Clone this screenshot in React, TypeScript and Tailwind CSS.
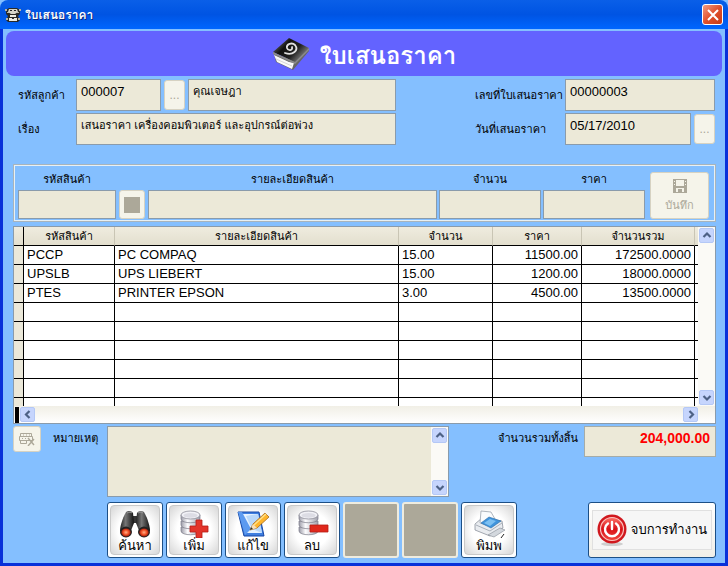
import { useId } from 'react'
import clsx from 'clsx'

interface Item {
  code: string
  name: string
  qty: string
  price: string
  total: string
}

const items: Item[] = [
  { code: 'PCCP', name: 'PC COMPAQ', qty: '15.00', price: '11500.00', total: '172500.0000' },
  { code: 'UPSLB', name: 'UPS LIEBERT', qty: '15.00', price: '1200.00', total: '18000.0000' },
  { code: 'PTES', name: 'PRINTER EPSON', qty: '3.00', price: '4500.00', total: '13500.0000' },
]

const EMPTY_ROWS = 6

const fieldBox = 'min-w-0 rounded-none border border-[#8a9bab] bg-[#ece9d8] text-black outline-none'
const flatButton = 'flex shrink-0 items-center justify-center rounded-[3px] border border-[#d6d2c2] bg-[#f5f4ea] text-[#aca899]'

function TitleIcon() {
  return (
    <svg viewBox="0 0 16 16" className="size-4 shrink-0">
      <path d="M1 3l3-2h8l3 2v4l-2 2 2 4-2 2H3l-2-2 2-4-2-2z" fill="#2a2a26" />
      <path d="M0 2h2v2H0zM14 2h2v2h-2zM2 5h2v1H2zM12 5h2v1h-2z" fill="#b5b3a6" />
      <path d="M4 2h8l1 3-3 2H6L3 5z" fill="#d6d4c8" />
      <path d="M5 3h2v1H5zM9 3h2v1H9z" fill="#222" />
      <path d="M5 8h6v2H5zM4 11h8v3H4z" fill="#ecebe2" />
      <path d="M7 11h2v1H7z" fill="#333" />
      <path d="M1 11h2v2H1zM13 11h2v2h-2z" fill="#b9b5a4" />
    </svg>
  )
}

function BookIcon() {
  return (
    <svg viewBox="0 0 38 34" className="h-[34px] w-[38px] shrink-0">
      <defs>
        <linearGradient id="book" x1="0" y1="0" x2="1" y2="0.6">
          <stop offset="0" stopColor="#999" />
          <stop offset="0.4" stopColor="#111" />
          <stop offset="0.7" stopColor="#222" />
          <stop offset="1" stopColor="#888" />
        </linearGradient>
      </defs>
      <path d="M2 17l2 8 17 8 16-19v-3L21 23z" fill="#666" />
      <path d="M2 18l3 7 15 7 2-6-5-1z" fill="#fafafa" />
      <path d="M4 22l16 7" stroke="#c5c5c5" strokeWidth="0.7" />
      <path d="M1 15L17 1l20 10-14 14z" fill="url(#book)" />
      <path d="M1 15l22 10 14-14v2L23 27 1 17z" fill="#8b8b8b" />
      <path d="M13 16c8 3 14-3 10-8-3-3-9-1-8 3 1 3 6 3 5-1" fill="none" stroke="#e0e0e0" strokeWidth="1.8" strokeLinecap="round" />
    </svg>
  )
}

function BinocularsIcon() {
  return (
    <svg viewBox="0 0 34 28" className="h-7 w-[34px]">
      <defs>
        <linearGradient id="barrel" x1="0" y1="0" x2="1" y2="0">
          <stop offset="0" stopColor="#222" />
          <stop offset="0.4" stopColor="#777" />
          <stop offset="1" stopColor="#111" />
        </linearGradient>
        <radialGradient id="lens">
          <stop offset="0" stopColor="#ffb089" />
          <stop offset="0.55" stopColor="#f4572c" />
          <stop offset="1" stopColor="#a81d0a" />
        </radialGradient>
      </defs>
      <path d="M14 6h6v7h-6z" fill="#333" />
      <path d="M8 2c2-2 6-1 7 1l1 10-4 10-10-2C2 17 4 9 8 2z" fill="url(#barrel)" />
      <path d="M26 2c-2-2-6-1-7 1l-1 10 4 10 10-2c0-4-2-12-6-19z" fill="url(#barrel)" />
      <path d="M9 3c2-1 4-1 5 0M20 3c2-1 3-1 5 0" stroke="#999" fill="none" />
      <ellipse cx="8" cy="22" rx="6" ry="5.4" fill="#222" />
      <ellipse cx="26" cy="22" rx="6" ry="5.4" fill="#222" />
      <ellipse cx="8" cy="22.4" rx="4.6" ry="4" fill="url(#lens)" />
      <ellipse cx="26" cy="22.4" rx="4.6" ry="4" fill="url(#lens)" />
    </svg>
  )
}

function DatabaseIcon({ sign }: { sign: 'plus' | 'minus' }) {
  return (
    <svg viewBox="0 0 34 28" className="h-7 w-[34px]">
      <defs>
        <linearGradient id="disk" x1="0" y1="0" x2="1" y2="0">
          <stop offset="0" stopColor="#9c9ca8" />
          <stop offset="0.35" stopColor="#fdfdff" />
          <stop offset="1" stopColor="#a0a0ac" />
        </linearGradient>
      </defs>
      <g fill="url(#disk)" stroke="#7d7d8a" strokeWidth="0.7">
        <path d="M4 17v4c0 5 19 5 19 0v-4z" />
        <path d="M4 11v4c0 5 19 5 19 0v-4z" />
        <path d="M4 5v4c0 5 19 5 19 0V5z" />
      </g>
      <ellipse cx="13.5" cy="5" rx="9.5" ry="4" fill="#f1f1f6" stroke="#8d8d98" strokeWidth="0.8" />
      <ellipse cx="13.5" cy="5.4" rx="7" ry="2.3" fill="#dcdce4" />
      {sign === 'plus' ? (
        <path d="M19 10h6v6h6v6h-6v6h-6v-6h-6v-6h6z" fill="#e3342a" stroke="#b51d14" strokeWidth="0.8" />
      ) : (
        <path d="M15 15h18v7H15z" fill="#e0281c" stroke="#b51d14" strokeWidth="0.8" />
      )}
    </svg>
  )
}

function EditIcon() {
  return (
    <svg viewBox="0 0 34 28" className="h-7 w-[34px]">
      <path d="M2 2h21l5 24H8z" fill="#3f7fe0" stroke="#1747a5" />
      <path d="M6 4h16l4 19H11z" fill="#e6f2ff" />
      <path d="M10 6l6 13 10 4-4-19z" fill="#b9d8fa" />
      <path d="M2 2h4l9 17-6 6z" fill="#5c9af0" />
      <path d="M14 20l3-6L29 3l4 4-12 11z" fill="#ffb52c" stroke="#a8691a" strokeWidth="0.8" />
      <path d="M18 15L30 4" stroke="#ffe28c" strokeWidth="1.4" />
      <path d="M14 20l3-6 4 4z" fill="#f7dfb8" />
      <path d="M14 20l1-3 2 2z" fill="#333" />
    </svg>
  )
}

function PrinterIcon() {
  return (
    <svg viewBox="0 0 34 28" className="h-7 w-[34px]">
      <path d="M3 14l7-6 20 3 1 7-13 8L3 20z" fill="#e9ecf0" stroke="#8b929c" strokeWidth="0.8" />
      <path d="M8 13l1-12 10 1 4 7-9 6z" fill="#f9fbfd" stroke="#9aa3ad" strokeWidth="0.8" />
      <path d="M9 13l8-6 12 4-10 7z" fill="#3f94dc" stroke="#2a6ba8" strokeWidth="0.6" />
      <path d="M12 13l6-4 6 2-6 5z" fill="#7cc0f2" />
      <path d="M4 15l14 6 12-8" stroke="#aab1ba" fill="none" />
      <path d="M16 25l12-7 5 2-11 7z" fill="#d3d8de" stroke="#858c95" strokeWidth="0.6" />
      <path d="M32 24l-3 4" stroke="#222" />
    </svg>
  )
}

function PowerIcon() {
  return (
    <svg viewBox="0 0 30 32" className="h-8 w-[30px] shrink-0">
      <defs>
        <linearGradient id="power" x1="0" y1="0" x2="0" y2="1">
          <stop offset="0" stopColor="#ff7167" />
          <stop offset="0.5" stopColor="#d81118" />
          <stop offset="1" stopColor="#f2453d" />
        </linearGradient>
      </defs>
      <ellipse cx="15" cy="30" rx="11" ry="2" fill="#cfcfcf" />
      <circle cx="15" cy="15" r="14.5" fill="#d0181e" />
      <circle cx="15" cy="15" r="11.5" fill="url(#power)" stroke="#f9c4c0" strokeWidth="1.2" />
      <path d="M11 9.5a7 7 0 1 0 8 0M15 8v7" fill="none" stroke="#fff" strokeWidth="2.4" strokeLinecap="round" />
    </svg>
  )
}

function FloppyIcon() {
  return (
    <svg viewBox="0 0 14 14" className="size-3.5" fill="currentColor">
      <path fillRule="evenodd" d="M0 0h14v14H0zM3 1v6h8V1zM3 9v4h2v-3h4v3h2V9z" />
      <path d="M6 11h2v2H6z" />
      <path d="M1 2h1v1H1zM12 2h1v1h-1zM1 5h1v1H1zM12 5h1v1h-1z" fill="#f5f4ea" />
    </svg>
  )
}

function RemoveRowIcon() {
  return (
    <svg viewBox="0 0 16 14" className="h-3.5 w-4" fill="none" stroke="currentColor">
      <path d="M1.500 1.500h11v3h-11zM.5 4.500h13v4H.5zM1.500 8.500h6v3h-6z" />
      <path d="M4 3h1M7 3h1M10 3h1M3 6.500h1M6 6.500h1M9 6.500h1" />
      <path d="M9 6l6 7M15 7l-6 7" strokeWidth="1.4" />
    </svg>
  )
}

type Direction = 'up' | 'down' | 'left' | 'right'

const arrows: Record<Direction, string> = {
  up: 'M1.500 6L5 2.500 8.500 6',
  down: 'M1.500 3L5 6.500 8.500 3',
  left: 'M6.500 1L3 4.500 6.500 8',
  right: 'M3.500 1L7 4.500 3.500 8',
}

function ScrollButton({ dir }: { dir: Direction }) {
  return (
    <button
      type="button"
      aria-label={dir}
      className="flex size-[15px] shrink-0 items-center justify-center rounded-[2px] border border-[#b4c8f6] bg-[#c6d5fd]"
    >
      <svg viewBox="0 0 10 9" className="h-[9px] w-2.5">
        <path d={arrows[dir]} fill="none" stroke="#4d6185" strokeWidth="2.2" />
      </svg>
    </button>
  )
}

interface FieldProps {
  label: string
  value: string
  className?: string
  labelClass?: string
  children?: React.ReactNode
}

function Field({ label, value, className, labelClass, children }: FieldProps) {
  const id = useId()
  return (
    <div className="flex items-center">
      <label htmlFor={id} className={clsx('shrink-0 text-[11px] whitespace-nowrap', labelClass)}>{label}</label>
      <input id={id} readOnly defaultValue={value} className={clsx(fieldBox, 'h-8 px-1 pb-2', className)} />
      {children}
    </div>
  )
}

function EntryField({ label, className }: { label: string; className?: string }) {
  const id = useId()
  return (
    <div className={clsx('flex min-w-0 flex-col', className)}>
      <label htmlFor={id} className="text-center text-[11px] leading-[22px]">{label}</label>
      <input id={id} readOnly className={clsx(fieldBox, 'h-[29px] w-full px-1')} />
    </div>
  )
}

function ToolButton({ label, children }: { label: string; children: React.ReactNode }) {
  return (
    <button type="button" className="size-14 shrink-0 rounded-[3px] border border-[#1c4f86] bg-white p-[2px]">
      <span className="flex size-full flex-col items-center rounded-[4px] border border-[#c9c9c9] bg-radial from-white from-50% to-[#d6d6d6] pt-1">
        {children}
        <span className="text-[13px] leading-4">{label}</span>
      </span>
    </button>
  )
}

function BlankButton() {
  return <button type="button" disabled aria-label="blank" className="size-14 shrink-0 rounded-[3px] border-2 border-[#efecdf] bg-[#aca899]" />
}

function ItemTable() {
  const head = 'border-b border-black border-r border-r-[#c9c5b4] font-normal'
  const cell = 'border-b border-r border-black px-[3px]'
  return (
    <table className="w-full table-fixed border-separate border-spacing-0 text-[13px] leading-[18px]">
      <colgroup>
        <col className="w-[10px]" />
        <col className="w-[91px]" />
        <col />
        <col className="w-[94px]" />
        <col className="w-[89px]" />
        <col className="w-[113px]" />
        <col className="w-[3px]" />
      </colgroup>
      <thead>
        <tr className="h-[19px] bg-linear-to-b from-[#efecdf] to-[#e2decd] text-[11px]">
          <th className="border-r border-b border-black" />
          <th className={head}>รหัสสินค้า</th>
          <th className={head}>รายละเอียดสินค้า</th>
          <th className={head}>จำนวน</th>
          <th className={head}>ราคา</th>
          <th className={head}>จำนวนรวม</th>
          <th className="border-b border-black" />
        </tr>
      </thead>
      <tbody>
        {items.map(item => (
          <tr key={item.code} className="h-[19px]">
            <td className="border-r border-b border-black bg-[#ebe8d9]" />
            <td className={cell}>{item.code}</td>
            <td className={cell}>{item.name}</td>
            <td className={cell}>{item.qty}</td>
            <td className={clsx(cell, 'text-right')}>{item.price}</td>
            <td className={clsx(cell, 'text-right')}>{item.total}</td>
            <td className="border-b border-black" />
          </tr>
        ))}
        {Array.from({ length: EMPTY_ROWS }, (_, i) => (
          <tr key={i} className="h-[19px]">
            <td className="border-r border-b border-black bg-[#ebe8d9]" />
            <td className={cell} />
            <td className={cell} />
            <td className={cell} />
            <td className={cell} />
            <td className={cell} />
            <td className="border-b border-black" />
          </tr>
        ))}
      </tbody>
    </table>
  )
}

export default function App() {
  return (
    <div className="flex min-h-screen flex-col bg-[#84bfff] font-['Liberation_Sans','Loma',sans-serif] text-black">
      <header className="flex h-[29px] shrink-0 items-center gap-1 rounded-t-lg bg-linear-to-b from-[#0a5fe8] via-[#0054e3] to-[#0066ff] px-[5px]">
        <TitleIcon />
        <h1 className="flex-1 text-[12px] font-bold text-white [text-shadow:1px_1px_#0a2a80]">ใบเสนอราคา</h1>
        <button
          type="button"
          aria-label="Close"
          className="flex size-[21px] items-center justify-center rounded-[3px] border border-white bg-linear-to-br from-[#f09a80] via-[#e0502c] to-[#c63a14]"
        >
          <svg viewBox="0 0 12 12" className="size-3">
            <path d="M1 1l10 10M11 1L1 11" stroke="#fff" strokeWidth="2" />
          </svg>
        </button>
      </header>

      <main className="flex flex-1 flex-col border-x-[3px] border-b-[3px] border-[#0831d9] pt-[2px]">
        <div className="mx-[3px] flex h-[45px] shrink-0 items-center justify-center gap-2.5 rounded-lg bg-[#6363ff]">
          <BookIcon />
          <h2 className="pt-1 text-[24px] leading-8 font-bold text-white">ใบเสนอราคา</h2>
        </div>

        <form className="flex flex-col pt-[3px] pr-[9px] pl-[10px]">
          <div className="flex justify-between pr-px">
            <div className="flex w-[383px] flex-col gap-[2px] pl-[5px]">
              <Field label="รหัสลูกค้า" value="000007" labelClass="w-[58px]" className="w-[85px] text-[13px]">
                <button type="button" className={clsx(flatButton, 'mx-[3px] h-[30px] w-[21px] text-[12px]')}>...</button>
                <input aria-label="ชื่อลูกค้า" readOnly defaultValue="คุณเจษฎา" className={clsx(fieldBox, 'h-8 flex-1 px-1 pb-2 text-[11px]')} />
              </Field>
              <Field label="เรื่อง" value="เสนอราคา เครื่องคอมพิวเตอร์ และอุปกรณ์ต่อพ่วง" labelClass="w-[58px]" className="flex-1 text-[11px]" />
            </div>
            <div className="flex w-[240px] flex-col gap-[2px]">
              <Field label="เลขที่ใบเสนอราคา" value="00000003" labelClass="w-[90px]" className="flex-1 text-[13px]" />
              <Field label="วันที่เสนอราคา" value="05/17/2010" labelClass="w-[90px]" className="flex-1 text-[13px]">
                <button type="button" className={clsx(flatButton, 'ml-[3px] h-[30px] w-[21px] text-[12px]')}>...</button>
              </Field>
            </div>
          </div>

          <div className="mt-[19px] flex items-end gap-[2px] border-2 border-[#e8f0f4] px-[3px] pt-[2px] pb-px outline-1 -outline-offset-1 outline-[#a8b4bc]">
            <EntryField label="รหัสสินค้า" className="w-[98px]" />
            <button type="button" aria-label="เลือกสินค้า" className={clsx(flatButton, 'mx-px h-[29px] w-[26px]')}>
              <span className="size-4 bg-[#aca899]" />
            </button>
            <EntryField label="รายละเอียดสินค้า" className="flex-1" />
            <EntryField label="จำนวน" className="w-[102px]" />
            <EntryField label="ราคา" className="w-[102px]" />
            <button type="button" className={clsx(flatButton, 'mr-[2px] ml-[3px] h-[47px] w-[59px] flex-col gap-1 text-[11px] leading-4')}>
              <FloppyIcon />
              บันทึก
            </button>
          </div>

          <div className="mt-1 border border-[#8a9bab] bg-white">
            <div className="flex h-[179px]">
              <div className="min-w-0 flex-1 overflow-hidden">
                <ItemTable />
              </div>
              <div className="flex w-[17px] flex-col items-center justify-between bg-[#fbfaf6] py-px">
                <ScrollButton dir="up" />
                <ScrollButton dir="down" />
              </div>
            </div>
            <div className="flex h-[17px] items-center bg-linear-to-b from-[#f1efe6] to-white pr-[17px]">
              <span className="mx-px h-4 w-1 bg-black" />
              <ScrollButton dir="left" />
              <span className="flex-1" />
              <ScrollButton dir="right" />
            </div>
          </div>

          <div className="mt-[2px] flex items-start">
            <button type="button" aria-label="ลบรายการ" className={clsx(flatButton, 'h-[26px] w-7')}>
              <RemoveRowIcon />
            </button>
            <label htmlFor="remark" className="w-[66px] pl-3 text-[11px] leading-6">หมายเหตุ</label>
            <div className="flex h-[71px] w-[342px] border border-[#8a9bab] bg-[#ece9d8]">
              <textarea id="remark" readOnly className="min-w-0 flex-1 resize-none outline-none" />
              <div className="flex w-[17px] flex-col items-center justify-between bg-[#fbfaf6] py-px">
                <ScrollButton dir="up" />
                <ScrollButton dir="down" />
              </div>
            </div>
            <label htmlFor="total" className="flex-1 pr-[6px] text-right text-[11px] leading-6">จำนวนรวมทั้งสิ้น</label>
            <input
              id="total"
              readOnly
              defaultValue="204,000.00"
              className="h-[31px] w-[132px] border border-[#a5aca8] bg-[#ece9d8] px-[5px] pb-2 text-right text-[14px] font-bold text-[#ff0000] outline-none"
            />
          </div>

          <div className="mt-[5px] flex items-start gap-[3px] pb-1 pl-[94px]">
            <ToolButton label="ค้นหา"><BinocularsIcon /></ToolButton>
            <ToolButton label="เพิ่ม"><DatabaseIcon sign="plus" /></ToolButton>
            <ToolButton label="แก้ไข"><EditIcon /></ToolButton>
            <ToolButton label="ลบ"><DatabaseIcon sign="minus" /></ToolButton>
            <BlankButton />
            <BlankButton />
            <ToolButton label="พิมพ"><PrinterIcon /></ToolButton>
            <button type="button" className="ml-auto flex h-14 w-32 items-center rounded-[3px] border border-[#1c4f86] bg-linear-to-b from-white to-[#f1efe8] px-[3px]">
              <span className="flex h-10 flex-1 items-center justify-center gap-1 border border-[#e0e0e0] bg-[#f6f6f6] text-[13px]">
                <PowerIcon />
                จบการทำงาน
              </span>
            </button>
          </div>
        </form>
      </main>
    </div>
  )
}
